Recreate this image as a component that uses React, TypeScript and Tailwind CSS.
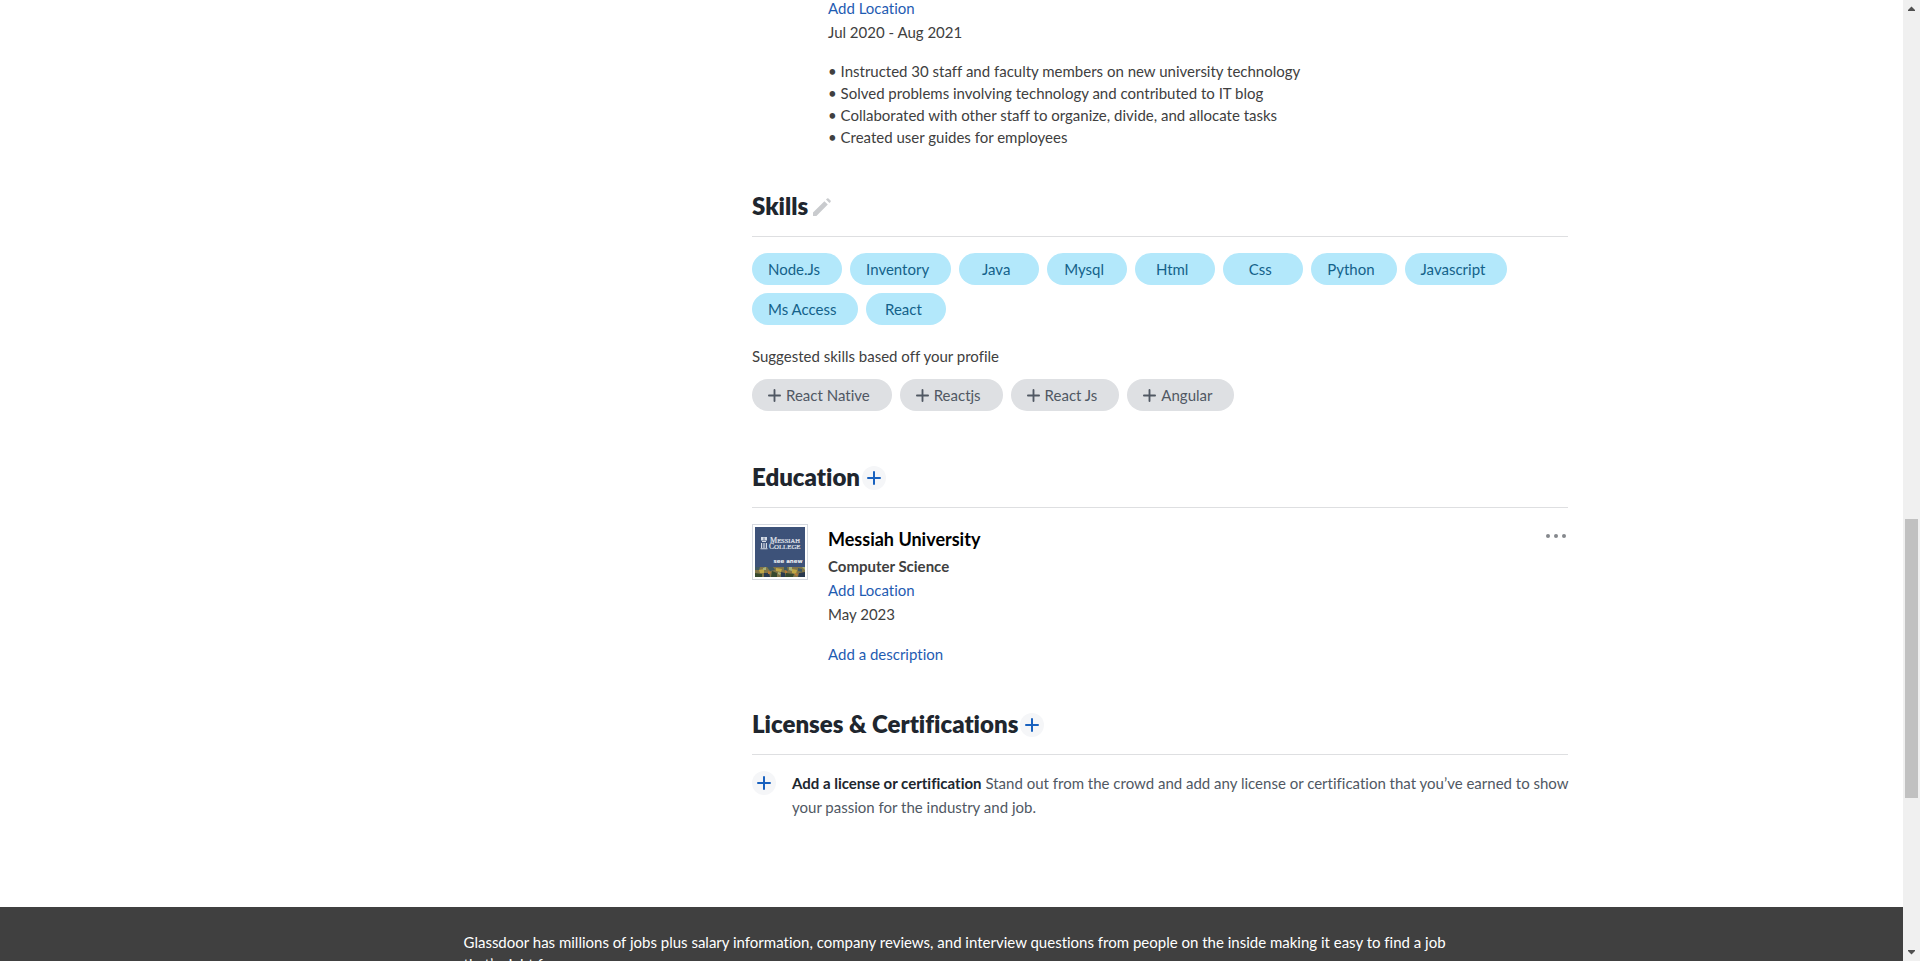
import type { ReactNode } from 'react';

const skills = ['Node.Js', 'Inventory', 'Java', 'Mysql', 'Html', 'Css', 'Python', 'Javascript', 'Ms Access', 'React'];
const suggestedSkills = ['React Native', 'Reactjs', 'React Js', 'Angular'];
const duties = [
  'Instructed 30 staff and faculty members on new university technology',
  'Solved problems involving technology and contributed to IT blog',
  'Collaborated with other staff to organize, divide, and allocate tasks',
  'Created user guides for employees',
];

function PlusIcon({ className }: { className: string }) {
  return (
    <svg viewBox="0 0 14 14" className={className} fill="none" stroke="currentColor" strokeLinecap="round" aria-hidden="true">
      <path d="M7 1v12M1 7h12" />
    </svg>
  );
}

function AddButton({ label }: { label: string }) {
  return (
    <button type="button" aria-label={label} className="flex size-6 shrink-0 items-center justify-center rounded-full bg-[#f5f6f8] text-[#1861bf]">
      <PlusIcon className="size-[14px] stroke-2" />
    </button>
  );
}

function SectionHeading({ title, action }: { title: string; action: ReactNode }) {
  return (
    <div className="flex h-[47px] items-start gap-[2px] border-b border-[#dedfe1]">
      <h2 className="text-2xl leading-8 font-extrabold text-[#20262e]">{title}</h2>
      <div className="flex h-8 items-center pt-[2px]">{action}</div>
    </div>
  );
}

function SchoolLogo() {
  return (
    <div className="size-14 shrink-0 border border-[#d5d9e0] p-[2px]">
      <svg viewBox="0 0 50 50" className="size-full" role="img" aria-label="Messiah College">
        <rect width="50" height="50" fill="#3d5279" />
        <g fill="#d5dbe5">
          <path d="M6 10h6v3.500H6zM7 14h4v1H7zM6 16h1.200v5H6zM8.400 16h1.200v5H8.400zM10.800 16H12v5h-1.200zM5.500 21.300h7v1h-7z" />
          <path d="M8.600 10.500h.8v3h-.8z" fill="#3d5279" />
        </g>
        <text x="15" y="15.500" fontSize="8" fontFamily="Liberation Serif, serif" fill="#e3e7ee" stroke="#e3e7ee" strokeWidth=".2">M<tspan fontSize="6.500">ESSIAH</tspan></text>
        <text x="14" y="21.500" fontSize="7.500" fontFamily="Liberation Serif, serif" fill="#e3e7ee" stroke="#e3e7ee" strokeWidth=".2">C<tspan fontSize="6.800">OLLEGE</tspan></text>
        <text x="18.500" y="36" fontSize="5.500" fontWeight="700" fontFamily="DejaVu Sans, sans-serif" fill="#f2f4f7">see anew</text>
        <rect y="40" width="50" height="10" fill="#817548" />
        <path d="M0 40h5l-1 3H0zM12 40h6l2 3-5 1zM29 40h3l1 4-4-1zM43 41l4 1v3l-4-1z" fill="#3f5962" />
        <path d="M4 43l5-1v4H5zM21 41l6 1-1 3-5-1zM37 42l5 1-1 4-4-1z" fill="#c0a846" />
        <path d="M0 46l7 1v3H0zM17 44l5 2v4h-6zM31 46l8 1-1 3h-8z" fill="#36492e" />
        <path d="M9 46h5l1 4H9zM26 45l4 1v4h-4zM44 46l6-1v5h-7z" fill="#29394e" />
        <path d="M8 41l3-1v3H8zM23 45l3 1-1 2-2-1zM34 40h3v4l-3-1zM47 40h3v3z" fill="#a7b17a" />
        <path d="M13 44l3 1-1 2h-2zM30 43l2 1v2h-2zM40 46l3 1-1 2-2-1z" fill="#b87835" />
      </svg>
    </div>
  );
}

function Experience() {
  return (
    <section className="pl-[76px]">
      <a href="#location" className="block w-fit leading-6 text-[#1f5cb2]">Add Location</a>
      <p className="leading-6">Jul 2020 - Aug 2021</p>
      <div className="mt-4 leading-[22px]">
        {duties.map((duty) => (
          <p key={duty}>• {duty}</p>
        ))}
      </div>
    </section>
  );
}

function Skills() {
  return (
    <section className="pt-[42px]">
      <SectionHeading
        title="Skills"
        action={
          <button type="button" aria-label="Edit skills" className="flex size-6 items-center justify-center text-[#c9cbce]">
            <svg viewBox="0 0 18 18" className="size-[18px]" fill="currentColor" aria-hidden="true">
              <path d="M0 18v-3.400L11.400 3.200l3.400 3.400L3.400 18zM13 1.600L14.100.5a1 1 0 0 1 1.400 0l2 2a1 1 0 0 1 0 1.400L16.400 5z" />
            </svg>
          </button>
        }
      />
      <ul className="mt-4 flex flex-wrap gap-2">
        {skills.map((skill) => (
          <li key={skill} className="min-w-20 rounded-full bg-[#b3e8fb] pr-[22px] pl-4 text-center leading-8 text-[#13628a]">
            {skill}
          </li>
        ))}
      </ul>
      <p className="mt-[19px] leading-6">Suggested skills based off your profile</p>
      <div className="mt-[11px] flex flex-wrap gap-2">
        {suggestedSkills.map((skill) => (
          <button key={skill} type="button" className="flex h-8 items-center gap-[5px] rounded-full bg-[#dee0e3] pr-[22px] pl-4 text-[#505863]">
            <PlusIcon className="size-[13px] stroke-2" />
            {skill}
          </button>
        ))}
      </div>
    </section>
  );
}

function Education() {
  return (
    <section className="pt-[50px]">
      <SectionHeading title="Education" action={<AddButton label="Add education" />} />
      <div className="mt-4 flex">
        <SchoolLogo />
        <div className="ml-5 grow">
          <h3 className="text-lg leading-[30px] font-bold text-black">Messiah University</h3>
          <p className="leading-6 font-bold">Computer Science</p>
          <a href="#location" className="block w-fit leading-6 text-[#1f5cb2]">Add Location</a>
          <p className="leading-6">May 2023</p>
          <a href="#description" className="mt-4 block w-fit leading-6 text-[#1f5cb2]">Add a description</a>
        </div>
        <button type="button" aria-label="More options" className="h-6 self-start px-[2px] text-[#85888d]">
          <svg viewBox="0 0 20 4" className="h-1 w-5" fill="currentColor" aria-hidden="true">
            <circle cx="2" cy="2" r="2" />
            <circle cx="10" cy="2" r="2" />
            <circle cx="18" cy="2" r="2" />
          </svg>
        </button>
      </div>
    </section>
  );
}

function Licenses() {
  return (
    <section className="pt-[42px]">
      <SectionHeading title="Licenses & Certifications" action={<AddButton label="Add license" />} />
      <div className="mt-4 flex gap-4">
        <AddButton label="Add a license or certification" />
        <p className="-mr-4 leading-6 text-[#505863]">
          <strong className="font-bold text-[#20262e]">Add a license or certification</strong> Stand out from the crowd and add any
          license or certification that you’ve earned to show your passion for the industry and job.
        </p>
      </div>
    </section>
  );
}

function Scrollbar() {
  return (
    <div className="flex w-[17px] shrink-0 flex-col items-center bg-[#f0f0f0] text-[#505050]" aria-hidden="true">
      <svg viewBox="0 0 17 17" className="size-[17px] shrink-0" fill="currentColor">
        <path d="M5 11V10L8.500 6.500 12 10v1z" />
      </svg>
      <div className="flex w-[13px] grow flex-col">
        <div className="grow-[502]" />
        <div className="grow-[279] bg-[#c1c1c1]" />
        <div className="grow-[146]" />
      </div>
      <svg viewBox="0 0 17 17" className="size-[17px] shrink-0" fill="currentColor">
        <path d="M5 6v1l3.500 3.500L12 7V6z" />
      </svg>
    </div>
  );
}

export default function App() {
  return (
    <div className="flex h-screen overflow-hidden bg-white font-['Lato',sans-serif] text-[15px] text-[#404040] [font-variant-ligatures:none]">
      <div className="min-w-0 grow overflow-hidden">
        <main className="mx-auto -mt-1 max-w-[1233px] pb-[88px] pl-[417px]">
          <Experience />
          <Skills />
          <Education />
          <Licenses />
        </main>
        <footer className="bg-[#404040] pt-6 pb-10 text-white">
          <div className="mx-auto max-w-[976px]">
            <p className="-mr-4 leading-[22px]">
              Glassdoor has millions of jobs plus salary information, company reviews, and interview questions from people on the
              inside making it easy to find a job that’s right for you.
            </p>
          </div>
        </footer>
      </div>
      <Scrollbar />
    </div>
  );
}
